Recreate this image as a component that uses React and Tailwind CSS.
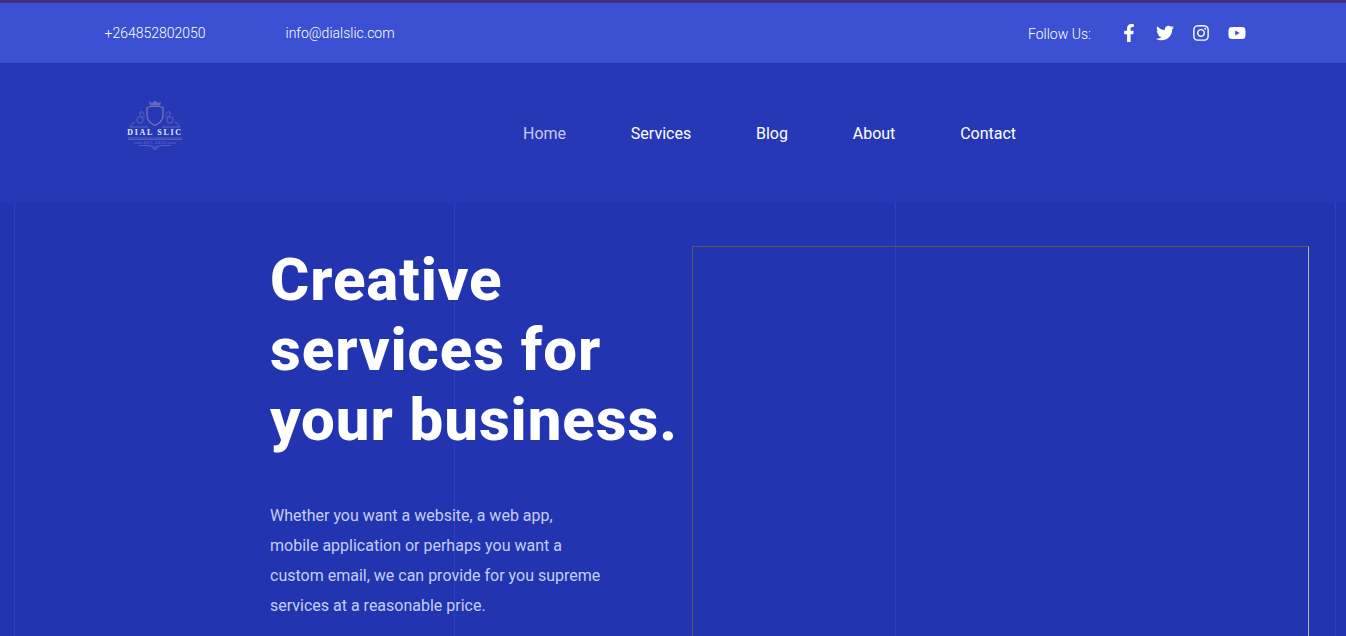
import React from "react";
import { FaFacebookF, FaTwitter, FaInstagram, FaYoutube } from "react-icons/fa";

function Logo() {
  return (
    <div className="relative w-[56px] h-[50px] mb-[16px]">
      <svg viewBox="0 0 56 50" className="absolute inset-0 w-full h-full" fill="none" stroke="#5a62bd" strokeWidth="1">
        <path d="M23 5.500 L22 1.500 L25 3 L28 0.500 L31 3 L34 1.500 L33 5.500 Z" fill="#6068bf" stroke="none" />
        <path d="M20 7.500 Q28 5 36 7.500 L36 16 Q35.500 22 28 25.500 Q20.500 22 20 16 Z" stroke="#7d79a6" strokeWidth="1.2" />
        <path d="M18 17 Q12 18 13 12 Q17 11 17 15 M38 17 Q44 18 43 12 Q39 11 39 15" />
        <circle cx="13" cy="20" r="3.200" />
        <circle cx="43" cy="20" r="3.200" />
        <path d="M8 22 Q5 23 3 27 L21 27 M48 22 Q51 23 53 27 L35 27" />
        <path d="M1 38 H55 M1 39.500 H55" strokeWidth="0.9" />
        <path d="M7 43 H16 M40 43 H49" strokeWidth="0.9" />
        <path d="M12 45.500 Q20 45 24 46 L28 50 L32 46 Q36 45 44 45.500" fill="#3d4ab9" />
      </svg>
      <span className="absolute left-0 right-0 top-[28px] text-center text-[8px] leading-[10px] font-bold tracking-[1.7px] text-[#e8eafa] whitespace-nowrap font-['Liberation_Serif',serif]">DIAL SLIC</span>
      <span className="absolute left-0 right-0 top-[40px] text-center text-[4px] leading-[5px] tracking-[0.5px] text-[#6c74c6] whitespace-nowrap">EST. 2020</span>
    </div>
  );
}

export default function App() {
  const nav = ["Services", "Blog", "About", "Contact"];
  return (
    <div className="relative h-[636px] overflow-hidden bg-[#2234b0] font-['Roboto',sans-serif]">
      <div className="absolute top-[63px] bottom-0 left-[14px] w-px bg-[#2f40c8]" />
      <div className="absolute top-[63px] bottom-0 left-[454px] w-px bg-[#2f40c8]" />
      <div className="absolute top-[63px] bottom-0 left-[895px] w-px bg-[#2f40c8]" />
      <div className="absolute top-[63px] bottom-0 left-[1335px] w-px bg-[#2f40c8]" />

      <div className="relative h-[3px] bg-[#452c7c]" />
      <header className="relative h-[60px] bg-[#3b50d3] flex items-center justify-between pl-[104.500px] pr-[91px] text-white text-sm font-light">
        <div className="flex">
          <span className="w-[181px] -mt-[1px]">+264852802050</span>
          <span className="-mt-[1px]">info@dialslic.com</span>
        </div>
        <div className="flex items-center">
          <span className="w-[83px] mt-[1px]">Follow Us:</span>
          <div className="flex items-center text-[18px]">
            <span className="w-[36px] flex justify-center"><FaFacebookF /></span>
            <span className="w-[36px] flex justify-center"><FaTwitter /></span>
            <span className="w-[36px] flex justify-center"><FaInstagram /></span>
            <span className="w-[36px] flex justify-center"><FaYoutube /></span>
          </div>
        </div>
      </header>
      <nav className="relative h-[140px] bg-[#2838b7]/90 flex items-center pl-[127px]">
        <Logo />
        <ul className="flex gap-[64.800px] ml-[340px] mt-[1px] text-base text-white">
          <li className="text-[#c3caf3]">Home</li>
          {nav.map((n) => (
            <li key={n}>{n}</li>
          ))}
        </ul>
      </nav>
      <main className="relative flex pl-[270px] pt-[42px]">
        <div className="w-[422px] shrink-0">
          <h1 className="text-[60px] leading-[70px] font-extrabold tracking-[0.9px] text-white whitespace-nowrap">
            Creative<br />services for<br />your business.
          </h1>
          <p className="mt-[46px] text-base leading-[30px] text-[#c5cdf6]">
            Whether you want a website, a web app,<br />
            mobile application or perhaps you want a<br />
            custom email, we can provide for you supreme<br />
            services at a reasonable price.
          </p>
        </div>
        <div className="w-[617px] h-[500px] mt-px border-t border-l border-r border-t-[#5a5a52] border-l-[#5a5a52] border-r-[#b5b2a0]" />
      </main>
    </div>
  );
}
